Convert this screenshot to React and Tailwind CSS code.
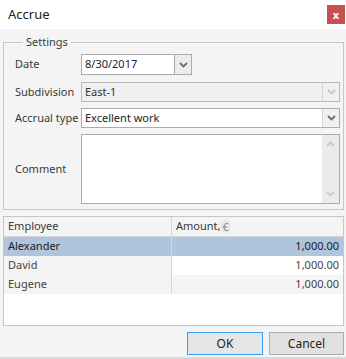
import React from 'react'

function Chevron({ className = 'text-[#6b6b6b]', up = false }) {
  return (
    <svg width="9" height="6" viewBox="0 0 9 6" className={className}>
      <path
        d={up ? 'M1 5 L4.5 1.5 L8 5' : 'M1 1 L4.5 4.5 L8 1'}
        fill="none"
        stroke="currentColor"
        strokeWidth="1.8"
      />
    </svg>
  )
}

const rows = [
  { name: 'Alexander', amount: '1,000.00', selected: true },
  { name: 'David', amount: '1,000.00' },
  { name: 'Eugene', amount: '1,000.00', alt: true },
]

export default function App() {
  return (
    <div className="w-[346px] h-[359px] bg-[#f4f4f4] flex flex-col font-['Noto_Sans',sans-serif] text-[11px] text-[#3a3a3a] overflow-hidden">
      {/* title bar */}
      <div className="h-[29px] bg-white flex items-center justify-between pl-[8px] pr-[1px] shrink-0">
        <span className="text-[13px] text-[#222] leading-none">Accrue</span>
        <button
          type="button"
          className="w-[18px] h-[19px] bg-[#c75050] text-white text-[11px] font-bold flex items-center justify-center leading-none"
        >
          x
        </button>
      </div>

      <div className="flex flex-col pl-[3px] pr-[2px] pt-[6px]">
        <fieldset className="border border-[#c6c6c6] pl-[11px] pr-[3px] pb-[5px]">
          <legend className="ml-[8px] px-[3px] leading-[14px] text-[#3a3a3a]">Settings</legend>

          <div className="flex items-center h-[21px] mt-[5px]">
            <span className="w-[66px] shrink-0">Date</span>
            <div className="flex h-full w-[111px]">
              <div className="flex-1 bg-white border border-[#ababab] flex items-center pl-[3px] text-[#222]">
                8/30/2017
              </div>
              <div className="w-[17px] border border-l-0 border-[#ababab] bg-[#ececec] flex items-center justify-center">
                <Chevron />
              </div>
            </div>
          </div>

          <div className="flex items-center h-[20px] mt-[7px]">
            <span className="w-[66px] shrink-0">Subdivision</span>
            <div className="flex flex-1 h-full border border-[#b9b9b9] bg-[#f0f0f0]">
              <div className="flex-1 flex items-center pl-[3px] text-[#333]">East-1</div>
              <div className="w-[17px] border-l border-[#d4d4d4] flex items-center justify-center">
                <Chevron className="text-[#c8c8c8]" />
              </div>
            </div>
          </div>

          <div className="flex items-center h-[20px] mt-[6px]">
            <span className="w-[66px] shrink-0">Accrual type</span>
            <div className="flex flex-1 h-full border border-[#ababab] bg-white">
              <div className="flex-1 flex items-center pl-[3px] text-[#222]">Excellent work</div>
              <div className="w-[17px] border-l border-[#d4d4d4] bg-[#f0f0f0] flex items-center justify-center">
                <Chevron />
              </div>
            </div>
          </div>

          <div className="flex items-center h-[70px] mt-[6px]">
            <span className="w-[66px] shrink-0">Comment</span>
            <div className="flex flex-1 h-full border border-[#ababab] bg-white">
              <div className="flex-1" />
              <div className="w-[17px] bg-[#ebebeb] flex flex-col items-center justify-between py-[6px]">
                <Chevron up className="text-[#cacaca]" />
                <Chevron className="text-[#cacaca]" />
              </div>
            </div>
          </div>
        </fieldset>

        {/* grid */}
        <div className="mt-[6px] h-[110px] border border-[#c6c6c6] bg-white flex flex-col">
          <div className="flex h-[20px] bg-[#f4f4f4] border-b border-[#d6d6d6] shrink-0">
            <div className="w-[168px] border-r border-[#d6d6d6] flex items-center pl-[4px]">Employee</div>
            <div className="flex-1 flex items-center pl-[4px]">
              Amount,
              <span className="bg-[#e9e9e9] text-[#8a8a8a] rounded-full px-[2px] leading-[13px]">€</span>
            </div>
          </div>
          {rows.map((r) => (
            <div
              key={r.name}
              className={`flex h-[19px] ${r.selected ? 'bg-[#b0c4de] text-[#1a1a1a]' : 'text-[#444]'}`}
            >
              <div
                className={`w-[168px] border-r border-[#d6d6d6] flex items-center pl-[4px] ${
                  r.selected ? '' : 'bg-[#f4f4f4]'
                }`}
              >
                {r.name}
              </div>
              <div
                className={`flex-1 flex items-center justify-end pr-[4px] ${
                  r.alt ? 'bg-[#f4f4f4]' : ''
                }`}
              >
                {r.amount}
              </div>
            </div>
          ))}
        </div>

        {/* buttons */}
        <div className="flex justify-end gap-[6px] mt-[6px]">
          <button
            type="button"
            className="w-[76px] h-[23px] border border-[#3c9cf0] bg-[#e5e5e5] text-[12px] text-[#222] leading-none"
          >
            OK
          </button>
          <button
            type="button"
            className="w-[75px] h-[23px] border border-[#adadad] bg-[#e1e1e1] text-[12px] text-[#222] leading-none"
          >
            Cancel
          </button>
        </div>
      </div>
      <div className="mt-auto h-[2px] bg-[#d8d8d8]" />
    </div>
  )
}
